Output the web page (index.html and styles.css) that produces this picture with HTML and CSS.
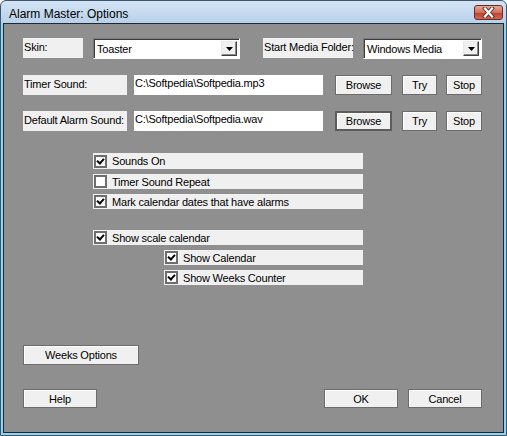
FILE: index.html
```html
<!DOCTYPE html>
<html lang="en">
<head>
  <title>Alarm Master: Options</title>
  <link rel="stylesheet" href="styles.css">
</head>
<body>

<div class="window">
  <!-- Title bar -->
  <div class="titlebar">
    <span class="title">Alarm Master: Options</span>
    <div class="close">
      <svg width="17" height="11" viewBox="0 0 17 11">
        <path d="M5 1.5 L12 9.5 M12 1.5 L5 9.5" stroke="#5a2a22" stroke-width="4" stroke-linecap="square"/>
        <path d="M5 1.5 L12 9.5 M12 1.5 L5 9.5" stroke="#fff" stroke-width="2.2" stroke-linecap="square"/>
      </svg>
    </div>
  </div>

  <div class="client">
    <!-- Skin / media folder -->
    <div class="row row-skin">
      <div class="label skin-label">Skin:</div>
      <div class="combo skin-combo">
        <span class="combo-text">Toaster</span>
        <span class="drop"><svg width="7" height="4" viewBox="0 0 7 4"><path d="M0 0 H7 L3.5 4 Z" fill="#000"/></svg></span>
      </div>
      <div class="label media-label">Start Media Folder:</div>
      <div class="combo media-combo">
        <span class="combo-text">Windows Media</span>
        <span class="drop"><svg width="7" height="4" viewBox="0 0 7 4"><path d="M0 0 H7 L3.5 4 Z" fill="#000"/></svg></span>
      </div>
    </div>

    <!-- Sounds -->
    <div class="row row-sound">
      <div class="label sound-label">Timer Sound:</div>
      <div class="field">C:\Softpedia\Softpedia.mp3</div>
      <button class="btn browse">Browse</button>
      <button class="btn try">Try</button>
      <button class="btn stop">Stop</button>
    </div>

    <div class="row row-sound">
      <div class="label sound-label">Default Alarm Sound:</div>
      <div class="field">C:\Softpedia\Softpedia.wav</div>
      <button class="btn browse default">Browse</button>
      <button class="btn try">Try</button>
      <button class="btn stop">Stop</button>
    </div>

    <!-- Options -->
    <div class="checks first-group">
      <div class="check tall"><span class="box on"></span>Sounds On</div>
      <div class="check"><span class="box"></span>Timer Sound Repeat</div>
      <div class="check"><span class="box on"></span>Mark calendar dates that have alarms</div>
    </div>

    <div class="checks second-group">
      <div class="check"><span class="box on"></span>Show scale calendar</div>
      <div class="check sub"><span class="box on"></span>Show Calendar</div>
      <div class="check sub"><span class="box on"></span>Show Weeks Counter</div>
    </div>

    <div class="row row-weeks">
      <button class="btn weeks">Weeks Options</button>
    </div>

    <div class="row row-bottom">
      <button class="btn wide">Help</button>
      <span class="spacer"></span>
      <button class="btn wide">OK</button>
      <button class="btn wide cancel">Cancel</button>
    </div>
  </div>
</div>

</body>
</html>
```

FILE: styles.css
```css
body {
  margin: 0;
  font-family: "Liberation Sans", Arial, sans-serif;
  font-size: 11px;
  letter-spacing: -0.2px;
  color: #000;
}
.window {
  width: 507px;
  height: 436px;
  box-sizing: border-box;
  border: 1px solid #3b5670;
  border-radius: 6px 6px 0 0;
  background: linear-gradient(#d4e4f4, #b8d0ea 22px, #8fd3f0 23px);
  padding: 0 2px 2px 2px;
  display: flex;
  flex-direction: column;
}
.titlebar {
  height: 22px;
  display: flex;
  align-items: center;
  padding-left: 6px;
  position: relative;
}
.title {
  font-size: 12px;
  letter-spacing: 0;
  margin-top: 3px;
}
.close {
  position: absolute;
  right: 1px;
  top: 4px;
  width: 29px;
  height: 15px;
  box-sizing: border-box;
  border: 1px solid #6b2b24;
  border-radius: 3px;
  background: linear-gradient(#e8a895, #d2705e 50%, #bd4030 51%, #cc6a52);
  display: flex;
  align-items: center;
  justify-content: center;
}
.client {
  flex: 1;
  background: #8f8f8f;
  border: 1px solid #1d2935;
  padding-top: 14px;
}
.row {
  display: flex;
  align-items: flex-start;
  padding-left: 19px;
}
.label {
  background: #f0f0f0;
  padding: 3px 1px 0;
  box-sizing: border-box;
  line-height: 13px;
  height: 20px;
  white-space: nowrap;
}
.skin-label { width: 60px; }
.media-label { width: 90px; margin-left: 23px; }
.sound-label { width: 104px; }
.combo {
  height: 21px;
  box-sizing: border-box;
  background: #fff;
  border: 1px solid;
  border-color: #7a7a7a #fff #fff #7a7a7a;
  box-shadow: inset 1px 1px #3c3c3c;
  display: flex;
  align-items: center;
}
.combo-text {
  flex: 1;
  padding-left: 3px;
  white-space: nowrap;
}
.skin-combo { width: 147px; margin-left: 10px; }
.media-combo { width: 119px; margin-left: 10px; }
.drop {
  width: 16px;
  height: 15px;
  margin-right: 2px;
  box-sizing: border-box;
  background: #f0f0f0;
  border: 1px solid;
  border-color: #e8e8e8 #404040 #404040 #e8e8e8;
  box-shadow: inset -1px -1px #8a8a8a;
  display: flex;
  align-items: center;
  justify-content: center;
}
.row-sound { margin-top: 16px; }
.field {
  width: 189px;
  height: 20px;
  margin-left: 7px;
  box-sizing: border-box;
  background: #fff;
  padding: 2px 1px 0;
  line-height: 13px;
}
.btn {
  font: inherit;
  letter-spacing: -0.2px;
  color: #000;
  height: 20px;
  padding: 0;
  box-sizing: border-box;
  background: #f0f0f0;
  border: 1px solid #6c6c6c;
  box-shadow: inset 1px 1px #fff;
}
.btn.default {
  border: 2px solid #5c5c5c;
}
.browse { width: 57px; margin-left: 12px; }
.try { width: 35px; margin-left: 10px; }
.stop { width: 36px; margin-left: 9px; }
.checks {
  display: flex;
  flex-direction: column;
  margin-left: 89px;
  width: 270px;
}
.first-group { margin-top: 22px; gap: 5px; }
.second-group { margin-top: 21px; gap: 5px; }
.check {
  height: 15px;
  background: #f0f0f0;
  display: flex;
  align-items: center;
  padding-left: 1px;
}
.check.tall { height: 16px; }
.check.sub {
  margin-left: 71px;
}
.box {
  width: 13px;
  height: 13px;
  box-sizing: border-box;
  border: 2px solid #6e6e6e;
  background: #fff;
  margin-right: 5px;
  display: flex;
  align-items: center;
  justify-content: center;
}
.box.on::after {
  content: "";
  width: 5px;
  height: 3px;
  border-left: 2px solid #000;
  border-bottom: 2px solid #000;
  transform: translate(0, -1px) rotate(-48deg);
}
.row-weeks { margin-top: 60px; }
.weeks { width: 116px; }
.row-bottom {
  margin-top: 24px;
  padding-right: 21px;
}
.row-bottom .btn { height: 19px; }
.wide { width: 74px; }
.cancel { margin-left: 10px; }
.spacer { flex: 1; }
```
